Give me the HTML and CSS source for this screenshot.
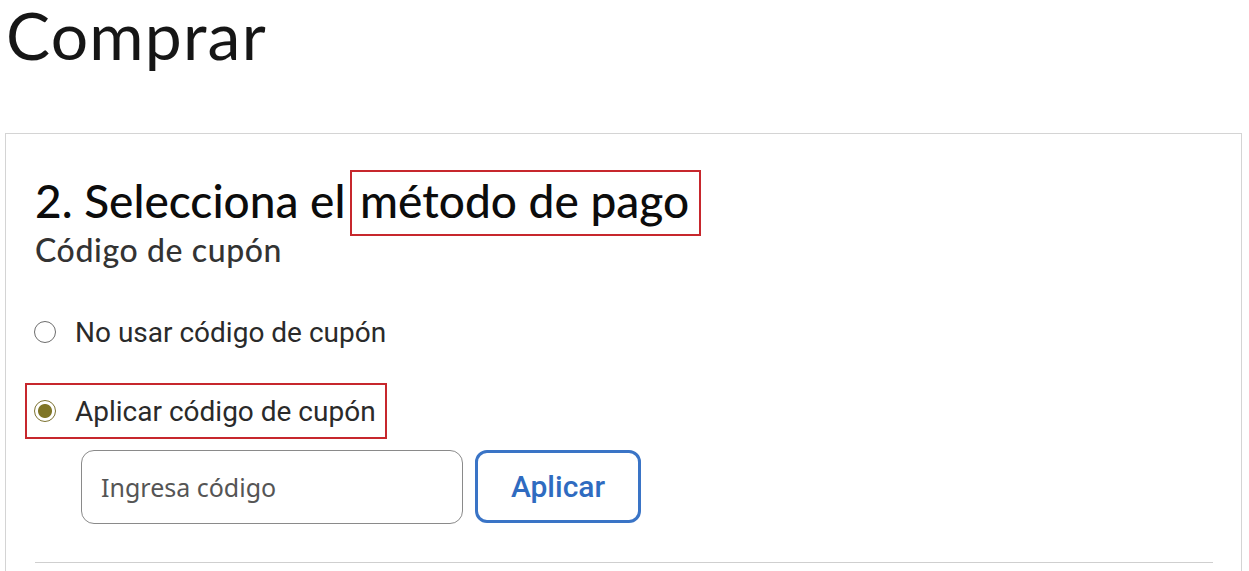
FILE: index.html
```html
<!DOCTYPE html>
<html lang="es">
<head>
<meta charset="utf-8">
<title>Comprar</title>
<link rel="stylesheet" href="styles.css">
</head>
<body>
  <h1 class="page-title">Comprar</h1>
  <section class="card">
    <h2 class="step-title">2. Selecciona el <span class="highlight">método de pago</span></h2>
    <h3 class="sub-title">Código de cupón</h3>
    <div class="options">
      <label class="option">
        <input type="radio" name="coupon" class="radio">
        <span class="option-text">No usar código de cupón</span>
      </label>
      <label class="option option-marked">
        <input type="radio" name="coupon" class="radio" checked>
        <span class="option-text">Aplicar código de cupón</span>
      </label>
    </div>
    <div class="coupon-row">
      <input type="text" class="coupon-input" placeholder="Ingresa código">
      <button type="button" class="apply-btn">Aplicar</button>
    </div>
    <div class="divider"></div>
  </section>
</body>
</html>
```

FILE: styles.css
```css
html, body {
  margin: 0;
  padding: 0;
  background: #ffffff;
}
body {
  font-family: "Lato", "Noto Sans", sans-serif;
  color: #111;
  overflow: hidden;
}
.page-title {
  margin: 0;
  padding: 0 0 0 6px;
  font-family: "Lato", sans-serif;
  font-weight: 400;
  font-size: 66px;
  line-height: 78px;
  margin-top: -4px;
  color: #161616;
  letter-spacing: 1.2px;
}
.card {
  margin: 59px 7px 0 5px;
  border: 1px solid #d4d4d4;
  border-bottom: none;
  padding: 36px 28px 0 29px;
  min-height: 500px;
}
.step-title {
  margin: 0;
  font-family: "Lato", sans-serif;
  font-weight: 500;
  font-size: 46px;
  line-height: 62px;
  color: #0c0c0c;
}
.highlight {
  border: 2px solid #c7272d;
  padding: 1px 10px 6px 8px;
  margin-left: -7px;
}
.sub-title {
  margin: 0;
  font-family: "Lato", sans-serif;
  font-weight: 500;
  font-size: 32px;
  line-height: 36px;
  letter-spacing: 0.6px;
  color: #333;
}
.options {
  display: flex;
  flex-direction: column;
  align-items: flex-start;
  gap: 23px;
  margin: 36px 0 0 -10px;
}
.option {
  display: flex;
  align-items: center;
  gap: 19px;
  height: 52px;
  padding: 0 9px 0 7px;
  border: 2px solid transparent;
  cursor: pointer;
}
.option-marked {
  border-color: #c7272d;
}
.radio {
  appearance: none;
  -webkit-appearance: none;
  margin: 0;
  width: 22px;
  height: 22px;
  border: 1.5px solid #6d6d6d;
  border-radius: 50%;
  box-sizing: border-box;
  background: #fff;
}
.radio:checked {
  border: 1.5px solid #7c7230;
  background: radial-gradient(circle, #7f7526 0 6.5px, #fff 7.5px);
}
.option-text {
  font-family: "Roboto", sans-serif;
  font-size: 28px;
  color: #2a2a2a;
}
.coupon-row {
  display: flex;
  gap: 12px;
  margin: 11px 0 0 46px;
}
.coupon-input {
  box-sizing: border-box;
  width: 382px;
  height: 74px;
  border: 1px solid #8a8a8a;
  border-radius: 13px;
  padding: 0 19px;
  font-family: "Noto Sans", sans-serif;
  font-size: 25px;
  color: #333;
  outline: none;
}
.coupon-input::placeholder {
  color: #555;
}
.apply-btn {
  box-sizing: border-box;
  width: 166px;
  height: 73px;
  border: 3px solid #3a74c6;
  border-radius: 12px;
  background: #fff;
  color: #2f6bc0;
  font-family: "Roboto", sans-serif;
  font-weight: 500;
  font-size: 30px;
  cursor: pointer;
}
.divider {
  margin: 38px 0 0 0;
  border-top: 1px solid #cfcfcf;
}
```
